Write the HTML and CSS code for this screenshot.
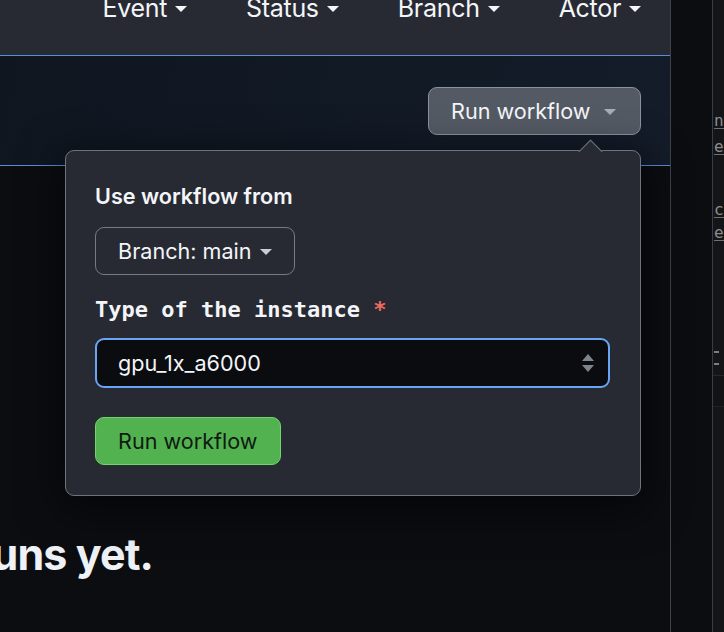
FILE: index.html
```html
<!DOCTYPE html>
<html>
<head>
<meta charset="utf-8">
<link rel="stylesheet" href="styles.css">
</head>
<body>
<div class="page">
  <div class="main">
    <header class="filters">
      <nav class="filter-nav">
        <span class="filter">Event<i class="caret"></i></span>
        <span class="filter">Status<i class="caret"></i></span>
        <span class="filter">Branch<i class="caret"></i></span>
        <span class="filter">Actor<i class="caret"></i></span>
      </nav>
    </header>
    <section class="banner">
      <button class="run-btn">Run workflow<i class="caret caret-muted"></i></button>
    </section>
    <section class="content">
      <div class="empty-wrap">
        <h2 class="empty">No workflow runs yet.</h2>
      </div>
    </section>

    <div class="popover">
      <span class="popover-arrow"></span>
      <div class="pop-title">Use workflow from</div>
      <button class="branch-btn">Branch: main<i class="caret caret-light"></i></button>
      <label class="field-label">Type of the instance <span class="req">*</span></label>
      <div class="select">
        <span class="select-value">gpu_1x_a6000</span>
        <svg class="stepper" width="14" height="20" viewBox="0 0 14 20"><path d="M7 1 L13 8 L1 8 Z" fill="#7d848e"/><path d="M1 12 L13 12 L7 19 Z" fill="#7d848e"/></svg>
      </div>
      <button class="green-btn">Run workflow</button>
    </div>
  </div>
  <aside class="side">
    <div class="side-gutter"></div>
    <div class="side-edge">
      <span class="frag f1">n</span>
      <span class="frag f2">e</span>
      <span class="frag f3">c</span>
      <span class="frag f4">e</span>
      <span class="dash d1"></span>
      <span class="dash d2"></span>
      <div class="band"></div>
    </div>
  </aside>
</div>
</body>
</html>
```

FILE: styles.css
```css
* { box-sizing: border-box; }
html, body { margin: 0; padding: 0; }
body {
  width: 724px;
  height: 632px;
  overflow: hidden;
  background: #0c0f13;
  font-family: Inter, "Noto Sans", "Liberation Sans", sans-serif;
  color: #f0f3f6;
}
.page {
  display: flex;
  height: 632px;
}
.main {
  position: relative;
  width: 671px;
  flex: none;
  border-right: 1px solid #3d434b;
  display: flex;
  flex-direction: column;
  background: #0b0e12;
}
.filters {
  height: 56px;
  flex: none;
  background: #272a32;
  border-bottom: 1px solid #5a8fd8;
  overflow: hidden;
}
.filter-nav {
  display: flex;
  justify-content: flex-end;
  margin-top: -11px;
  padding-right: 29px;
}
.filter {
  display: inline-flex;
  align-items: center;
  font-size: 25px;
  line-height: 38px;
  color: #f3f5f8;
  letter-spacing: -0.3px;
  margin-left: 59px;
}
.filter:first-child { margin-left: 0; }
.caret {
  display: inline-block;
  width: 0;
  height: 0;
  border-left: 6.5px solid transparent;
  border-right: 6.5px solid transparent;
  border-top: 6.5px solid #f3f5f8;
  margin-left: 8px;
  margin-top: 2px;
}
.caret-muted { border-top-color: #a7adb5; margin-left: 13px; }
.caret-light { border-top-color: #c9ced4; margin-left: 8px; }
.banner {
  height: 110px;
  flex: none;
  background: linear-gradient(100deg, #0f1620 0%, #121a26 60%, #141c29 100%);
  border-bottom: 1px solid #5a8fd8;
  display: flex;
  justify-content: flex-end;
  align-items: flex-start;
  padding: 31px 29px 0 0;
}
.run-btn {
  height: 48px;
  width: 213px;
  background: #545a64;
  border: 1px solid #8c939d;
  border-radius: 9px;
  color: #f3f5f8;
  font-family: inherit;
  font-size: 21.6px;
  display: flex;
  align-items: center;
  padding: 0 0 0 22px;
}
.content {
  flex: 1;
  background: #0b0d11;
  padding-top: 362px;
}
.empty-wrap {
  width: 153px;
  display: flex;
  justify-content: flex-end;
}
.empty {
  flex: none;
  margin: 0;
  font-size: 43px;
  font-weight: 700;
  letter-spacing: -0.9px;
  color: #eef1f5;
  white-space: nowrap;
}
.popover {
  position: absolute;
  left: 65px;
  top: 150px;
  width: 576px;
  height: 346px;
  background: #272a32;
  border: 1px solid #6d747e;
  border-radius: 9px;
  padding: 32px 29px 0 29px;
  box-shadow: 0 10px 40px 6px rgba(0, 0, 0, 0.55);
  display: flex;
  flex-direction: column;
  align-items: flex-start;
}
.popover-arrow {
  position: absolute;
  top: -8px;
  left: 516px;
  width: 17px;
  height: 17px;
  background: #272a32;
  border-left: 1px solid #6d747e;
  border-top: 1px solid #6d747e;
  transform: rotate(45deg);
}
.pop-title {
  font-size: 21.6px;
  font-weight: 600;
  line-height: 26px;
  color: #f3f5f8;
}
.branch-btn {
  margin-top: 18px;
  height: 48px;
  width: 200px;
  background: transparent;
  border: 1px solid #747b85;
  border-radius: 9px;
  color: #f3f5f8;
  font-family: inherit;
  font-size: 21.6px;
  display: flex;
  align-items: center;
  padding: 0 0 0 22px;
}
.field-label {
  margin-top: 22px;
  font-family: "DejaVu Sans Mono", "Liberation Mono", monospace;
  font-weight: 700;
  font-size: 22px;
  line-height: 26px;
  color: #f3f5f8;
}
.req { color: #f06a5f; }
.select {
  margin-top: 15px;
  width: 515px;
  height: 50px;
  background: #0a0c10;
  border: 2px solid #6aa5f4;
  border-radius: 9px;
  display: flex;
  align-items: center;
  padding: 0 13px 0 21px;
  font-size: 21.6px;
  color: #f3f5f8;
}
.select-value { flex: 1; }
.stepper { flex: none; }
.green-btn {
  margin-top: 29px;
  height: 48px;
  width: 186px;
  background: #52b250;
  border: 1px solid #73d36c;
  border-radius: 9px;
  color: #0f1a12;
  font-family: inherit;
  font-size: 21.6px;
  text-align: left;
  padding: 0 0 0 22px;
}
.side {
  flex: 1;
  display: flex;
}
.side-gutter {
  width: 42px;
  background: #0b0d10;
  border-right: 1px solid #3a3d42;
}
.side-edge {
  flex: 1;
  background: #141516;
  position: relative;
  overflow: hidden;
}
.frag {
  position: absolute;
  left: 1px;
  font-family: "DejaVu Sans Mono", monospace;
  font-size: 16px;
  color: #8a8d92;
  line-height: 14px;
  border-bottom: 1px solid #6c6f74;
}
.f1 { top: 114px; }
.f2 { top: 140px; }
.f3 { top: 203px; }
.f4 { top: 226px; }
.dash {
  position: absolute;
  left: 1px;
  width: 5px;
  height: 2px;
  background: #7a7d82;
}
.d1 { top: 351px; }
.d2 { top: 363px; }
.band {
  position: absolute;
  left: 0;
  right: 0;
  top: 375px;
  height: 32px;
  border-top: 1px solid #26282b;
  border-bottom: 1px solid #1f2123;
  background: #121314;
}
```
